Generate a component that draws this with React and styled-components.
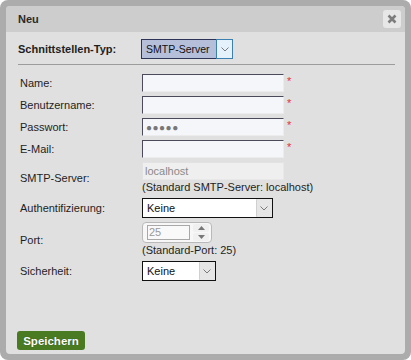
import React from "react";
import styled, { createGlobalStyle } from "styled-components";

const Global = createGlobalStyle`
  html, body { margin: 0; padding: 0; background: #ffffff; }
  body { font-family: "Liberation Sans", Arial, sans-serif; font-size: 11px; color: #1e1e1e; }
  * { box-sizing: border-box; }
`;

const Frame = styled.div`
  width: 411px;
  height: 360px;
  background: #acacac;
  border-radius: 8px;
  padding: 6px;
`;

const Panel = styled.div`
  height: 100%;
  background: #e0e0e0;
  border-radius: 4px;
  display: flex;
  flex-direction: column;
`;

const TitleBar = styled.div`
  height: 26px;
  background: #cdcdcd;
  border-radius: 4px 4px 0 0;
  display: flex;
  align-items: center;
  justify-content: space-between;
  padding: 0 4px 0 12px;
`;

const Title = styled.span`
  font-weight: bold;
  font-size: 11px;
  color: #2a2a2a;
`;

const CloseButton = styled.div`
  width: 18px;
  height: 18px;
  margin-top: -1px;
  background: #e7e7e7;
  border-radius: 3px;
  display: flex;
  align-items: center;
  justify-content: center;
`;

const Body = styled.div`
  flex: 1;
  display: flex;
  flex-direction: column;
  padding: 7px 10px 4px 12px;
`;

const TypeRow = styled.div`
  display: grid;
  grid-template-columns: 123px auto;
  align-items: center;
  height: 20px;
`;

const BoldLabel = styled.span`
  font-weight: bold;
  font-size: 11px;
  color: #1e1e1e;
`;

const Separator = styled.div`
  height: 1px;
  background: #9c9c9c;
  margin: 5px 0 9px 0;
`;

const Form = styled.div`
  display: flex;
  flex-direction: column;
  gap: 4px;
`;

const Row = styled.div`
  display: grid;
  grid-template-columns: 124px auto;
  align-items: center;
`;

const Label = styled.span`
  padding-left: 2px;
  color: #1e1e1e;
`;

const Field = styled.div`
  display: flex;
  flex-direction: column;
  align-items: flex-start;
`;

const InputLine = styled.div`
  display: flex;
  align-items: flex-start;
`;

const TextInput = styled.div`
  width: 142px;
  height: 18px;
  background: ${(p) => (p.$disabled ? "#efefef" : "#f5f6fa")};
  border-top: 1px solid ${(p) => (p.$disabled ? "#e2e2e2" : "#4a4a5a")};
  border-left: 1px solid ${(p) => (p.$disabled ? "#e2e2e2" : "#4a4a5a")};
  border-right: 1px solid ${(p) => (p.$disabled ? "#e8e8e8" : "#ececec")};
  border-bottom: 1px solid ${(p) => (p.$disabled ? "#e8e8e8" : "#ececec")};
  color: #8a8a8a;
  padding-left: 2px;
  line-height: 15px;
  font-size: 11px;
  display: flex;
  align-items: center;
`;

const Dots = styled.span`
  letter-spacing: 0.5px;
  font-size: 10px;
  color: #777;
  padding-left: 1px;
`;

const Required = styled.span`
  color: #e8303c;
  font-size: 11px;
  line-height: 11px;
  margin-left: 3px;
  margin-top: 2px;
`;

const Help = styled.span`
  line-height: 14px;
  color: #1e1e1e;
`;

const Select = styled.div`
  width: ${(p) => p.$w}px;
  height: 20px;
  display: flex;
  border: 1px solid ${(p) => (p.$focused ? "#2e3358" : "#111")};
  background: ${(p) => (p.$focused ? "#b6bfda" : "#ffffff")};
`;

const SelectText = styled.span`
  flex: 1;
  display: flex;
  align-items: center;
  padding-left: 4px;
  font-size: ${(p) => (p.$focused ? 10.5 : 11)}px;
  color: #111;
  white-space: nowrap;
`;

const Arrow = styled.span`
  width: ${(p) => (p.$focused ? 17 : 16)}px;
  flex: none;
  display: flex;
  align-items: center;
  justify-content: center;
  background: ${(p) => (p.$focused ? "#e5f1fb" : "#e6e6e6")};
  border: 1px solid ${(p) => (p.$focused ? "#3c7fb1" : "#e6e6e6")};
  border-left: 1px solid ${(p) => (p.$focused ? "#3c7fb1" : "#d0d0d0")};
  margin: ${(p) => (p.$focused ? "-1px -1px -1px 0" : "0")};
`;

const Spinner = styled.div`
  width: 70px;
  height: 21px;
  border: 1px solid #b9b9b9;
  border-radius: 4px;
  background: #f7f7f7;
  display: flex;
  align-items: center;
  padding: 0 2px 0 4px;
  gap: 3px;
`;

const SpinBox = styled.div`
  width: 44px;
  height: 15px;
  border: 1px solid #a8a8a8;
  background: #f9f9f9;
  color: #9a9a9a;
  font-size: 11px;
  line-height: 13px;
  padding-left: 1px;
`;

const SpinButtons = styled.div`
  display: flex;
  flex-direction: column;
  gap: 1px;
  margin-left: auto;
`;

const SpinBtn = styled.div`
  width: 16px;
  height: 8px;
  border-radius: 2px;
  background: #f0f0f0;
  display: flex;
  align-items: center;
  justify-content: center;
`;

const Footer = styled.div`
  margin-top: auto;
`;

const SaveButton = styled.button`
  margin-left: -1px;
  height: 19px;
  width: 68px;
  border: none;
  border-radius: 3px;
  background: #4a7b22;
  color: #ffffff;
  font-family: "Liberation Sans", Arial, sans-serif;
  font-weight: bold;
  font-size: 11.5px;
  text-shadow: 0 0 1px rgba(0, 0, 0, 0.5);
  padding: 0;
  display: flex;
  align-items: center;
  justify-content: center;
`;

const Chevron = () => (
  <svg width="8" height="5" viewBox="0 0 8 5">
    <path d="M0.5 0.5 L4 4 L7.5 0.5" fill="none" stroke="#7a7a7a" strokeWidth="1" />
  </svg>
);

const Tri = ({ up }) => (
  <svg width="7" height="4" viewBox="0 0 7 4">
    <path d={up ? "M0 4 L3.5 0 L7 4 Z" : "M0 0 L3.5 4 L7 0 Z"} fill="#777" />
  </svg>
);

const CloseIcon = () => (
  <svg width="10" height="10" viewBox="0 0 10 10">
    <path d="M1.5 1.5 L8.5 8.5 M8.5 1.5 L1.5 8.5" stroke="#7d7d7d" strokeWidth="2.6" strokeLinecap="butt" />
  </svg>
);

const SimpleRow = ({ label, children, required }) => (
  <Row>
    <Label>{label}</Label>
    <Field>
      <InputLine>
        {children}
        {required && <Required>*</Required>}
      </InputLine>
    </Field>
  </Row>
);

export default function App() {
  return (
    <>
      <Global />
      <Frame>
        <Panel>
          <TitleBar>
            <Title>Neu</Title>
            <CloseButton>
              <CloseIcon />
            </CloseButton>
          </TitleBar>
          <Body>
            <TypeRow>
              <BoldLabel>Schnittstellen-Typ:</BoldLabel>
              <Select $w={92} $focused>
                <SelectText $focused>SMTP-Server</SelectText>
                <Arrow $focused>
                  <Chevron />
                </Arrow>
              </Select>
            </TypeRow>
            <Separator />
            <Form>
              <SimpleRow label="Name:" required>
                <TextInput />
              </SimpleRow>
              <SimpleRow label="Benutzername:" required>
                <TextInput />
              </SimpleRow>
              <SimpleRow label="Passwort:" required>
                <TextInput>
                  <Dots>●●●●●</Dots>
                </TextInput>
              </SimpleRow>
              <SimpleRow label="E-Mail:" required>
                <TextInput />
              </SimpleRow>
              <Row>
                <Label>SMTP-Server:</Label>
                <Field>
                  <TextInput $disabled>localhost</TextInput>
                  <Help>(Standard SMTP-Server: localhost)</Help>
                </Field>
              </Row>
              <SimpleRow label="Authentifizierung:">
                <Select $w={131}>
                  <SelectText>Keine</SelectText>
                  <Arrow>
                    <Chevron />
                  </Arrow>
                </Select>
              </SimpleRow>
              <Row>
                <Label>Port:</Label>
                <Field>
                  <Spinner>
                    <SpinBox>25</SpinBox>
                    <SpinButtons>
                      <SpinBtn>
                        <Tri up />
                      </SpinBtn>
                      <SpinBtn>
                        <Tri />
                      </SpinBtn>
                    </SpinButtons>
                  </Spinner>
                  <Help>(Standard-Port: 25)</Help>
                </Field>
              </Row>
              <SimpleRow label="Sicherheit:">
                <Select $w={74}>
                  <SelectText>Keine</SelectText>
                  <Arrow>
                    <Chevron />
                  </Arrow>
                </Select>
              </SimpleRow>
            </Form>
            <Footer>
              <SaveButton>Speichern</SaveButton>
            </Footer>
          </Body>
        </Panel>
      </Frame>
    </>
  );
}
